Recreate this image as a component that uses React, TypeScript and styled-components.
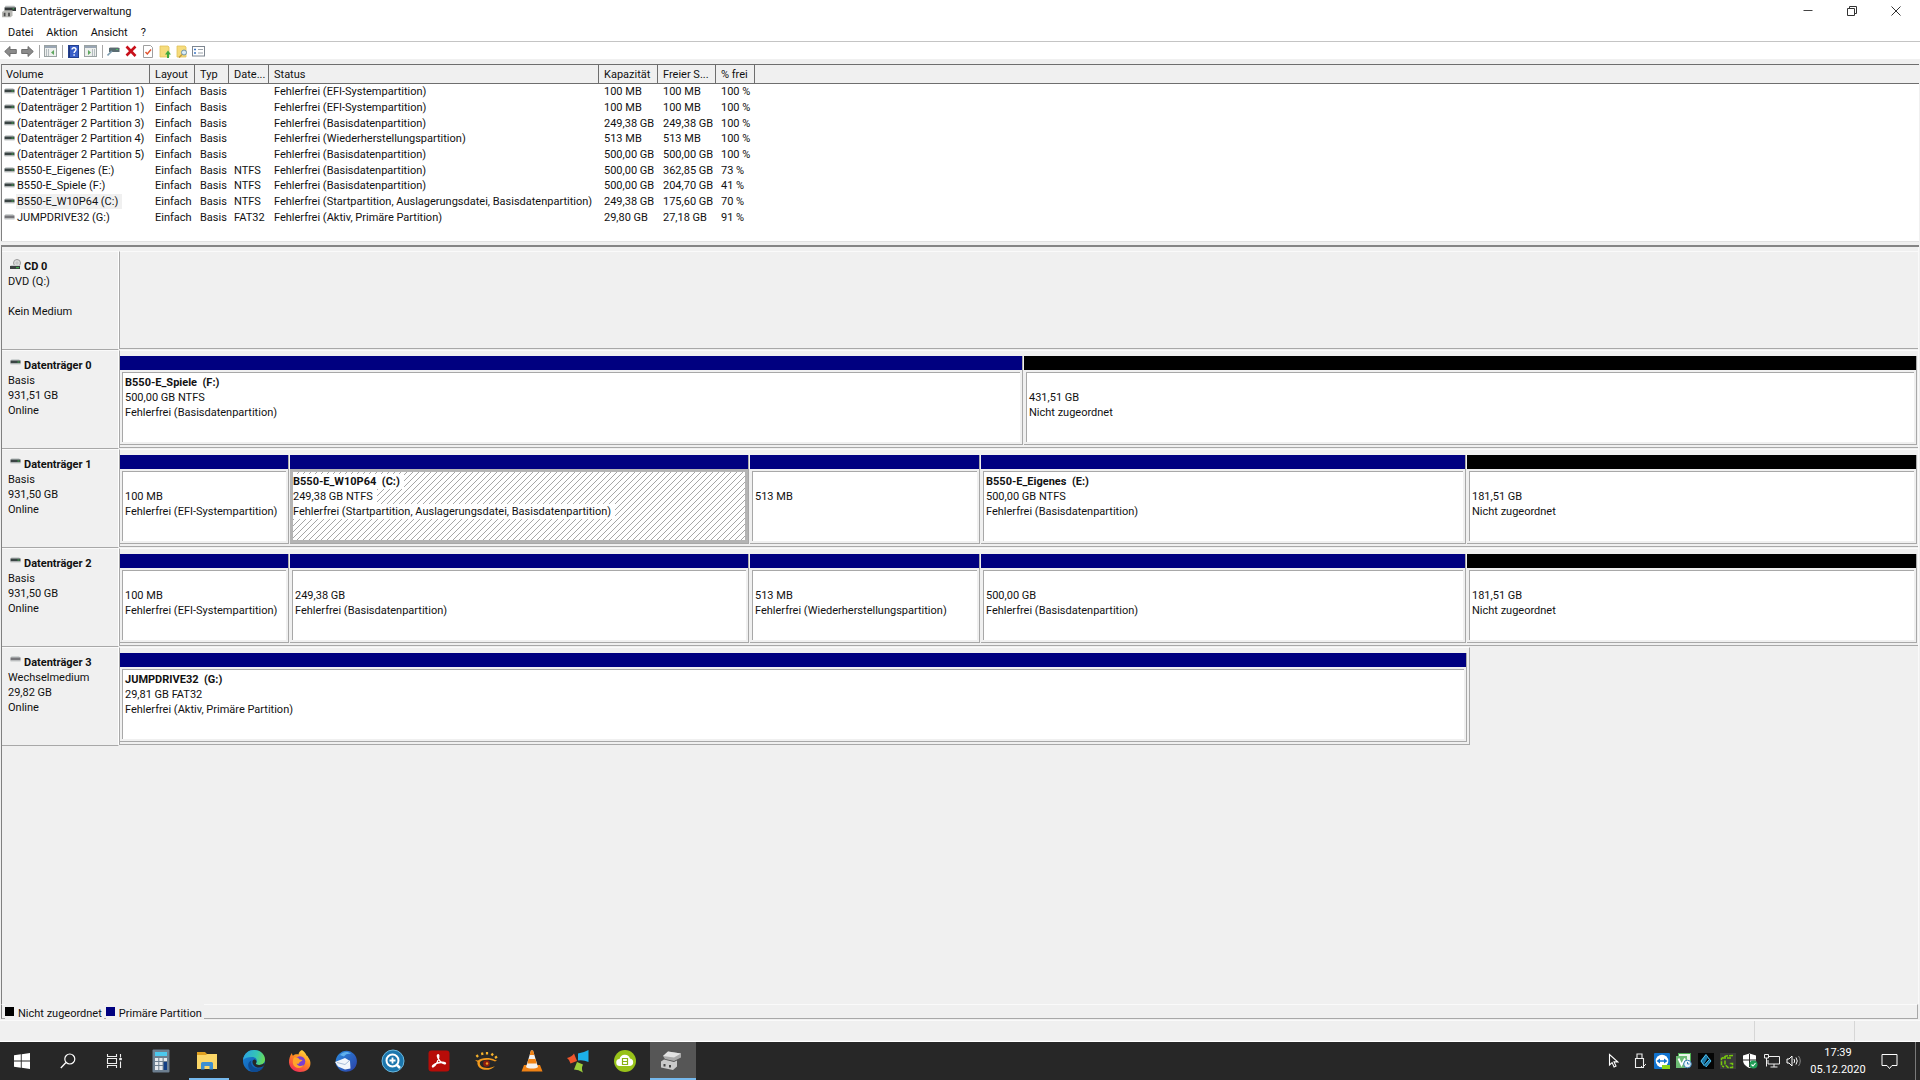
import React from "react";
import styled, { createGlobalStyle, css } from "styled-components";

const GlobalStyle = createGlobalStyle`
  *, *::before, *::after { box-sizing: border-box; }
  html, body { margin: 0; padding: 0; }
  body {
    background: #f0f0f0;
    color: #111;
    font-family: Roboto, "Open Sans", "Liberation Sans", sans-serif;
    font-size: 11px;
    line-height: 15px;
  }
  button { font: inherit; color: inherit; border: 0; background: none; padding: 0; margin: 0; }
  svg { display: block; }
  h1, h2, h3, p { margin: 0; font-size: inherit; font-weight: inherit; }
`;

const Shell = styled.div`
  display: flex;
  flex-direction: column;
  min-height: 100vh;
`;

/* ---------- window chrome ---------- */

const TitleBar = styled.header`
  display: flex;
  align-items: center;
  height: 22px;
  padding: 0 2px;
  background: #fff;
`;

const WindowTitle = styled.h1`
  flex: 1;
  padding-left: 4px;
`;

const WindowButton = styled.button`
  display: grid;
  place-items: center;
  width: 44px;
  height: 22px;
`;

const MenuBar = styled.nav`
  display: flex;
  align-items: center;
  gap: 13px;
  height: 20px;
  padding-left: 8px;
  background: #fff;
  border-bottom: 1px solid #c4c4c4;
`;

const MenuButton = styled.button`
  height: 19px;
  padding-top: 2px;
`;

const Toolbar = styled.div`
  display: flex;
  align-items: center;
  height: 17px;
  padding: 1px 0 0 2px;
  background: #fff;
`;

const ToolButton = styled.button`
  display: grid;
  place-items: center;
  width: 17px;
  height: 16px;
`;

const ToolSeparator = styled.span`
  width: 1px;
  height: 13px;
  margin: 0 2px 0 3px;
  background: #a6a6a6;
`;

/* ---------- volume list ---------- */

const VolumePane = styled.section`
  margin: 5px 1px 0;
  padding-bottom: 16px;
  background: #fff;
  border-top: 1px solid #6e6e6e;
  border-left: 1px solid #808080;
`;

const VolumeTable = styled.table`
  width: 100%;
  height: 160px;
  border-collapse: separate;
  border-spacing: 0;
  table-layout: fixed;
`;

const Column = styled.col<{ $width?: number }>`
  ${(p) => p.$width && css`width: ${p.$width}px;`}
`;

const HeadCell = styled.th`
  height: 19px;
  padding: 1px 0 0 5px;
  overflow: hidden;
  white-space: nowrap;
  font-weight: 400;
  text-align: left;
  line-height: 17px;
  background: #f0f0f0;
  border-right: 1px solid #6e6e6e;
  border-bottom: 1px solid #6e6e6e;
  &:first-child { padding-left: 4px; }
  &:last-child { border-right: 0; }
`;

const Cell = styled.td`
  padding: 0 0 0 5px;
  white-space: nowrap;
`;

const NameCell = styled(Cell)`
  padding-left: 2px;
`;

const VolumeName = styled.span<{ $selected?: boolean }>`
  display: flex;
  align-items: center;
  gap: 1px;
  span {
    padding: 0 4px 0 1px;
    background: ${(p) => (p.$selected ? "#f0f0f0" : "transparent")};
  }
`;

const Splitter = styled.div`
  height: 6px;
  margin: 0 1px;
  border-top: 1px solid #e2e2e2;
  border-bottom: 2px solid #858585;
`;

/* ---------- graphical view ---------- */

const DiskPane = styled.main`
  flex: 1;
  margin: 0 1px;
  padding-top: 4px;
  border-left: 1px solid #808080;
  border-right: 1px solid #fafafa;
`;

const DiskRow = styled.section`
  display: grid;
  grid-template-columns: 117px 1fr;
  height: 99px;
`;

const DiskLabel = styled.div`
  padding: 7px 0 0 6px;
  border-top: 1px solid #fafafa;
  border-right: 1px solid #fff;
  border-bottom: 1px solid #a8a8a8;
`;

const DiskName = styled.h2`
  display: flex;
  gap: 3px;
  height: 15px;
  padding-left: 2px;
  font-weight: 700;
  line-height: 15px;
`;

const DiskLine = styled.p`
  min-height: 15px;
`;

const VolumeArea = styled.div<{ $columns?: string; $partial?: boolean }>`
  display: grid;
  grid-template-columns: ${(p) => p.$columns ?? "1fr"};
  column-gap: 1px;
  width: ${(p) => (p.$partial ? "calc(75% + 2px)" : "100%")};
  height: 98px;
  padding: 5px ${(p) => (p.$partial ? 2 : 1)}px 2px 0;
  border-left: 1px solid #a8a8a8;
  border-bottom: 1px solid #a8a8a8;
  border-top: 1px solid #fafafa;
  border-right: ${(p) => (p.$partial ? "1px solid #a8a8a8" : "0")};
`;

const Partition = styled.article`
  display: flex;
  flex-direction: column;
  min-width: 0;
  border-right: 1px solid #a8a8a8;
  border-bottom: 1px solid #a8a8a8;
`;

const PartitionBar = styled.div<{ $free?: boolean }>`
  height: 14px;
  background: ${(p) => (p.$free ? "#000" : "#000080")};
`;

const PartitionBody = styled.div<{ $active?: boolean }>`
  flex: 1;
  margin: 2px;
  padding: 2px 0 0 2px;
  overflow: hidden;
  background-color: #fff;
  border-top: 1px solid #a8a8a8;
  border-left: 1px solid #a8a8a8;
  ${(p) =>
    p.$active &&
    css`
      margin: 0;
      padding: 2px 0 0;
      border: 3px solid #b4b4b4;
      background-image: linear-gradient(135deg, transparent 44%, #a6a6a6 44%, #a6a6a6 54%, transparent 54%);
      background-size: 6px 6px;
    `}
`;

const PartitionLine = styled.p<{ $strong?: boolean }>`
  width: fit-content;
  min-height: 15px;
  white-space: pre;
  background: #fff;
  padding-right: 4px;
  font-weight: ${(p) => (p.$strong ? 700 : 400)};
`;

const Legend = styled.footer`
  display: flex;
  align-items: center;
  gap: 2px;
  height: 15px;
  margin: 0 2px 0 1px;
  padding-left: 3px;
  border-left: 1px solid #808080;
  border-top: 1px solid #fafafa;
  border-right: 1px solid #a8a8a8;
  border-bottom: 1px solid #a8a8a8;
`;

const LegendItem = styled.span`
  display: flex;
  align-items: center;
  gap: 4px;
  height: 17px;
  padding: 3px 2px 0 0;
  background: #f0f0f0;
`;

const Swatch = styled.i<{ $color: string }>`
  width: 9px;
  height: 9px;
  margin-bottom: 4px;
  background: ${(p) => p.$color};
`;

const StatusBar = styled.div`
  display: grid;
  grid-template-columns: 1fr 100px 65px;
  height: 22px;
  margin-top: 1px;
  border-top: 1px solid #fafafa;
  border-bottom: 1px solid #fff;
`;

const StatusCell = styled.span`
  border-right: 1px solid #d6d6d6;
  &:last-child { border-right: 0; }
`;

/* ---------- taskbar ---------- */

const Taskbar = styled.footer`
  display: flex;
  align-items: stretch;
  justify-content: space-between;
  height: 38px;
  background: #272727;
`;

const Apps = styled.div`
  display: grid;
  grid-template-columns: repeat(15, 1fr);
  flex: 0 1 696px;
`;

const AppButton = styled.button<{ $running?: boolean; $active?: boolean }>`
  display: grid;
  place-items: center;
  padding-right: 3px;
  ${(p) => p.$running && css`
    background: linear-gradient(#76b9ed, #76b9ed) center bottom / 40px 2px no-repeat;
  `}
  ${(p) => p.$active && css`
    background: #565656;
    border-bottom: 2px solid #76b9ed;
    padding-top: 2px;
  `}
`;

const Tray = styled.div`
  display: flex;
  align-items: center;
`;

const TrayButton = styled.button<{ $width?: number }>`
  display: grid;
  place-items: center;
  width: ${(p) => p.$width ?? 22}px;
  height: 38px;
`;

const Clock = styled.time`
  width: 56px;
  margin-left: 5px;
  color: #fff;
  text-align: center;
  line-height: 17px;
`;

const DesktopEdge = styled.button`
  width: 5px;
  height: 38px;
  margin-left: 3px;
  border-left: 1px solid #7a7a7a;
`;

/* ---------- drawings ---------- */

const DriveIcon = ({ removable }: { removable?: boolean }) => (
  <svg width="11" height="9" viewBox="0 0 11 9" aria-hidden="true">
    <path d="M1.500 1h7.500L10.500 3H.5z" fill="#cfd3d3" />
    <rect x=".5" y="2.500" width="10" height="3" fill={removable ? "#77777b" : "#3a4444"} />
    <rect x=".5" y="5.500" width="10" height="1" fill="#c3c7c7" />
    {!removable && <rect x="7.500" y="3.500" width="2" height="1" fill="#3fae4d" />}
  </svg>
);

const CdIcon = () => (
  <svg width="11" height="12" viewBox="0 0 11 12" aria-hidden="true">
    <circle cx="7" cy="4" r="3.500" fill="#dcdcdc" stroke="#9a9a9a" />
    <circle cx="7" cy="4" r="1" fill="#fff" stroke="#999" strokeWidth=".6" />
    <path d="M1 6h8l2 1.500H0z" fill="#c9cccc" />
    <rect y="7" width="10" height="3" fill="#3b4040" />
    <rect x="6" y="8" width="3" height="1.200" fill="#3fae4d" />
  </svg>
);

const AppIcon = () => (
  <svg width="14" height="14" viewBox="0 0 16 16" aria-hidden="true">
    <path d="M4 2h10l2 2v3H3V4z" fill="#b8bcbc" />
    <rect x="3" y="4" width="13" height="4" fill="#33383a" />
    <rect x="12" y="5" width="2" height="1" fill="#41c05a" />
    <path d="M0 9l3-2h9v6l-2 2H0z" fill="#b9b9b5" />
    <rect x="2" y="10" width="2" height="4" fill="#4c4c4c" />
    <rect x="7" y="10" width="2" height="4" fill="#4c4c4c" />
  </svg>
);

const Arrow = ({ flip }: { flip?: boolean }) => (
  <svg width="13" height="13" viewBox="0 0 13 13" aria-hidden="true">
    <path d={flip ? "M12.3 6.5L7 1.5v3H.7v4H7v3z" : "M.7 6.5L6 1.5v3h6.3v4H6v3z"} fill="#8b8b8b" stroke="#666" strokeWidth=".9" />
  </svg>
);

const PaneIcon = ({ right }: { right?: boolean }) => (
  <svg width="13" height="12" viewBox="0 0 13 12" aria-hidden="true">
    <rect x=".5" y=".5" width="12" height="11" fill="#eef0ee" stroke="#9aa2a2" />
    <rect x="1" y="1" width="11" height="2" fill="#9aa6b4" />
    <path d={right ? "M8.5 4v7M10.5 4v7" : "M2.5 4v7M4.5 4v7"} stroke="#b4bcc0" />
    <path d={right ? "M4 5l3 2.5L4 10z" : "M10 5L7 7.5l3 2.5z"} fill="#5fa85f" />
  </svg>
);

const HelpIcon = () => (
  <svg width="11" height="13" viewBox="0 0 11 13" aria-hidden="true">
    <rect x=".5" y=".5" width="10" height="12" fill="#3a5fc8" stroke="#23408f" />
    <path d="M1.5 1v11" stroke="#1f357c" />
    <path d="M4 4.6C4 2 8 2.2 8 4.6 8 6.200 6.100 6.300 6.100 8M6.100 9.300v1.500" stroke="#fff" strokeWidth="1.400" fill="none" />
  </svg>
);

const PlugIcon = () => (
  <svg width="13" height="12" viewBox="0 0 13 12" aria-hidden="true">
    <path d="M3 2h8l2 1.500H2z" fill="#b8bcbc" />
    <rect x="2" y="3" width="10.500" height="4" fill="#5a6c72" />
    <rect x="9" y="4" width="2" height="1" fill="#49c25e" />
    <path d="M.5 10.500L5 6" stroke="#7f9db0" strokeWidth="1.600" />
  </svg>
);

const DeleteIcon = () => (
  <svg width="12" height="12" viewBox="0 0 12 12" aria-hidden="true">
    <path d="M1.500 1.500l9 9.500M10.500 1.500L1.500 10.500" stroke="#c8101a" strokeWidth="2.600" />
  </svg>
);

const CheckDocIcon = () => (
  <svg width="10" height="13" viewBox="0 0 10 13" aria-hidden="true">
    <path d="M.5.5h7l2 2v10h-9z" fill="#fff" stroke="#9f9f9f" />
    <path d="M2.500 7l1.800 2L8 4.500" stroke="#e0512c" strokeWidth="1.400" fill="none" />
  </svg>
);

const FolderUpIcon = () => (
  <svg width="12" height="13" viewBox="0 0 12 13" aria-hidden="true">
    <path d="M1 1h8l1 1v10H1z" fill="#f6dc7c" stroke="#e2c258" strokeWidth=".8" />
    <path d="M8 13V9.500H6l3-4 3 4h-2V13z" fill="#3da83d" />
  </svg>
);

const FolderSearchIcon = () => (
  <svg width="12" height="13" viewBox="0 0 12 13" aria-hidden="true">
    <path d="M1 1h8l1 1v10H1z" fill="#f6dc7c" stroke="#e2c258" strokeWidth=".8" />
    <circle cx="8" cy="7.500" r="2.500" fill="#d9ecf8" stroke="#6f93a8" />
    <path d="M6 9.500L3 12.500" stroke="#c49a3a" strokeWidth="1.500" />
  </svg>
);

const ListIcon = () => (
  <svg width="13" height="11" viewBox="0 0 13 11" aria-hidden="true">
    <rect x=".5" y=".5" width="12" height="9.500" fill="#fff" stroke="#7e8690" />
    <path d="M2 3.500h2M2 7h2" stroke="#3c78c8" strokeWidth="1.400" />
    <path d="M6 3.500h5M6 7h5" stroke="#9ba3ab" />
  </svg>
);

const MinimizeIcon = () => (
  <svg width="10" height="10" viewBox="0 0 10 10" aria-hidden="true"><path d="M.5 4.500h9" stroke="#444" /></svg>
);
const RestoreIcon = () => (
  <svg width="10" height="10" viewBox="0 0 10 10" aria-hidden="true">
    <path d="M.5 2.500h7v7h-7zM2.500 2.500v-2h7v7h-2" fill="none" stroke="#333" />
  </svg>
);
const CloseIcon = () => (
  <svg width="10" height="10" viewBox="0 0 10 10" aria-hidden="true"><path d="M.5.5l9 9M9.500.5l-9 9" stroke="#333" /></svg>
);

const StartIcon = () => (
  <svg width="16" height="16" viewBox="0 0 16 16" aria-hidden="true">
    <path d="M0 2.300L6.800 1.300v6.200H0zM7.700 1.200L16 0v7.500H7.700zM0 8.400h6.800v6.300L0 13.700zM7.700 8.400H16V16l-8.300-1.200z" fill="#fff" />
  </svg>
);
const SearchIcon = () => (
  <svg width="16" height="16" viewBox="0 0 16 16" aria-hidden="true">
    <circle cx="9.800" cy="6" r="5" fill="none" stroke="#fff" strokeWidth="1.200" />
    <path d="M6 9.500L.8 15" stroke="#fff" strokeWidth="1.300" />
  </svg>
);
const TaskViewIcon = () => (
  <svg width="17" height="16" viewBox="0 0 17 16" aria-hidden="true">
    <path d="M1.500 1v2.500h9V1M1.500 15v-2.500h9V15M1.500 5.500h9v5h-9zM14.500 1v3.500M14.500 8.500V15" fill="none" stroke="#eee" strokeWidth="1.100" />
    <rect x="13.200" y="5" width="2.600" height="2.200" fill="#eee" />
  </svg>
);
const CalcIcon = () => (
  <svg width="18" height="24" viewBox="0 0 18 24" aria-hidden="true">
    <rect x=".5" y=".5" width="17" height="23" rx="1" fill="#6d7f90" />
    <rect x="3" y="3" width="12" height="4" fill="#4cc8ee" />
    <g fill="#e6eaee">
      <path d="M3 9h3.300v3H3zM7.300 9h3.300v3H7.300zM11.700 9H15v3h-3.300zM3 13h3.300v3H3zM7.300 13h3.300v3H7.300zM3 17h3.300v4H3zM7.300 17h3.300v4H7.300z" />
    </g>
    <rect x="11.700" y="13" width="3.300" height="8" fill="#123f86" />
  </svg>
);
const ExplorerIcon = () => (
  <svg width="22" height="20" viewBox="0 0 22 20" aria-hidden="true">
    <path d="M1 1h8l2 2h10v5H1z" fill="#e0a020" />
    <path d="M1 4h9l1-1h10v15H1z" fill="#fbd667" />
    <path d="M5 18.500v-6q0-1.500 1.500-1.500h9q1.500 0 1.500 1.500v6h-3.500V15h-5v3.500z" fill="#3d8fd1" />
  </svg>
);
const EdgeIcon = () => (
  <svg width="24" height="24" viewBox="0 0 24 24" aria-hidden="true">
    <defs>
      <linearGradient id="edgeTop" x1="0" x2="1" y1=".3" y2=".5"><stop offset="0" stopColor="#2ba3e4" /><stop offset=".6" stopColor="#35c5b4" /><stop offset="1" stopColor="#6bdc55" /></linearGradient>
      <linearGradient id="edgeLow" x1="0" x2="1" y1="0" y2="1"><stop offset="0" stopColor="#1a87dc" /><stop offset="1" stopColor="#0f4f9f" /></linearGradient>
    </defs>
    <circle cx="12" cy="12" r="11" fill="url(#edgeLow)" />
    <path d="M1 11C2 4 7 1 12 1c7 0 11 5 11 9.500 0 4-3.500 5.500-6 5.500-2.500 0-3.500-1-3-1.800 2-2.500.500-6.200-4-6.200C6 8 2.500 9 1 11z" fill="url(#edgeTop)" />
    <path d="M9.500 11.500C8 16 12 20 17 19.500c2 0 3.500-.700 4.500-1.500-2 3.500-6 5.300-10 5C7 22 5.500 17 6.500 14.500c.500-1.500 1.500-2.500 3-3z" fill="#0e4b93" />
    <path d="M10.500 12.500c.3-1.500 1.500-2.200 2.700-1.800 1.500.8 1.600 2.400.8 3.500-.500.800.500 1.800 3 1.800 2.200 0 4-.700 5.300-2l.5 1.500c-1.500 2-3.500 3-6 3-4 0-6.700-3-6.300-6z" fill="#272727" />
  </svg>
);
const FirefoxIcon = () => (
  <svg width="24" height="24" viewBox="0 0 24 24" aria-hidden="true">
    <defs><linearGradient id="fox" x1=".8" x2=".2" y1="0" y2="1"><stop offset="0" stopColor="#ffe043" /><stop offset=".45" stopColor="#ff8a20" /><stop offset="1" stopColor="#f0245c" /></linearGradient></defs>
    <path d="M14 1c3 2 4 4 4.500 5.500 1 .3 1.300 1 1.500 1.500 2 2.500 2.800 5 2.300 8C21.500 20 18 23 12 23S1.500 19 1 13.500C.8 10 2 6.500 4 4c0 1.200.3 2 1 2.800C6.500 5.300 9 5 10.500 5.500 10.800 3.500 12 1.800 14 1z" fill="url(#fox)" />
    <circle cx="12" cy="12.500" r="5.300" fill="#7b3fd0" />
    <path d="M6 8.500c2.500-.5 4.500.5 5.500 2l3 .5c-.5 1.300-2 1.500-3 2 .3 2-2.500 2-3 1.500 1 2.500 4.500 3.500 7 1.500-1.500 4-9 4-10.500-1-.5-2 0-5 1-6.500z" fill="#ffa52a" />
  </svg>
);
const ThunderbirdIcon = () => (
  <svg width="24" height="24" viewBox="0 0 24 24" aria-hidden="true">
    <defs><linearGradient id="bird" x1="0" x2="1" y1="0" y2="1"><stop offset="0" stopColor="#2b8de0" /><stop offset="1" stopColor="#2b3fa6" /></linearGradient></defs>
    <path d="M5 5C9 .5 16 .5 20 5c4.500 5 3.500 12-1 15.500C14 24 8 23 5 20l-3-4C1 12 2 8 5 5z" fill="url(#bird)" />
    <path d="M1 13l10-4 5 3 .5 7.500-5.500 1-7-3z" fill="#f2f6fb" />
    <path d="M3 13.500l8 2 4.500-4" fill="none" stroke="#a8bdd8" />
    <path d="M6 6c3-3.500 8-4 11-1-3-.5-5 0-7 2.500z" fill="#5fb0ee" />
  </svg>
);
const MagnifierIcon = () => (
  <svg width="24" height="24" viewBox="0 0 24 24" aria-hidden="true">
    <circle cx="12" cy="12" r="11" fill="#1b76ad" stroke="#6bb9df" />
    <circle cx="11.500" cy="11.500" r="6" fill="none" stroke="#fff" strokeWidth="2" />
    <path d="M16 16l3 3" stroke="#fff" strokeWidth="2.500" />
    <path d="M11.500 8.500v6M8.500 11.500h6" stroke="#fff" strokeWidth="1.800" />
  </svg>
);
const AcrobatIcon = () => (
  <svg width="22" height="22" viewBox="0 0 22 22" aria-hidden="true">
    <rect x=".5" y=".5" width="21" height="21" rx="3" fill="#b70c08" />
    <path d="M5 17c3-1.500 6.500-8 5.800-11.500-.3-1.300-1.800-.8-1.400.8C10 9.500 13 13 16.500 13.800c1.500.2 1.300-1.400-.4-1.500-3.600-.2-8.600 1.200-11 3-.9.800-.9 1.700-.1 1.700z" fill="none" stroke="#fff" strokeWidth="1.300" />
  </svg>
);
const EyeIcon = () => (
  <svg width="24" height="22" viewBox="0 0 24 22" aria-hidden="true">
    <path d="M1 10l3 .5C7 7.500 16 7 21 10l2 .5-2 1C17 9 8 9 6 12c-1 3 2 6 7 6 3 0 5-.5 8-2-3 3.500-8 4.500-12 3.500C4 18 3 14 3.500 12z" fill="#f39a1d" />
    <circle cx="12.500" cy="13.500" r="3.300" fill="#8c1d10" />
    <circle cx="13" cy="13.500" r="1.200" fill="#f39a1d" />
    <path d="M4 7L2.500 5M8.500 5L8 2.500M13 4.500V2M17.500 5.500L19 3.500M21 8l2-1.500" stroke="#f6b22c" strokeWidth="2.200" />
  </svg>
);
const ConeIcon = () => (
  <svg width="22" height="24" viewBox="0 0 22 24" aria-hidden="true">
    <path d="M3 16h16l2.500 6.500H.5z" fill="#f08214" />
    <path d="M10 1.500h2L17 18c-2 2-10 2-12 0z" fill="#f5f2ee" />
    <path d="M9.900 1.500h2.200l1.200 4.500H8.700zM7.500 10h7l1.200 4.500H6.300z" fill="#f08214" />
  </svg>
);
const PinwheelIcon = () => (
  <svg width="24" height="24" viewBox="0 0 24 24" aria-hidden="true">
    <path d="M12 4.500q5-.5 10.500-3.500v12Q17 10.500 12 11.500z" fill="#1cb0ea" />
    <path d="M1 9Q6 7.500 8 4.500L11 12 4.500 14.500Q4 11 1 9z" fill="#f0562c" />
    <path d="M11 13l6 2.500q-2 4 0 8-4.500-3-9-3z" fill="#9bcf3a" />
  </svg>
);
const CloudIcon = () => (
  <svg width="24" height="24" viewBox="0 0 24 24" aria-hidden="true">
    <circle cx="12" cy="12" r="11" fill="#98c21a" />
    <path d="M7 17a3.500 3.500 0 01-.5-7A5.500 5.500 0 0117 9.500 3.800 3.800 0 0117 17z" fill="#fff" />
    <path d="M9.500 9.500h5v6h-5zM9.500 12.500h5" fill="none" stroke="#88b114" strokeWidth="1.200" />
  </svg>
);
const DiskAppIcon = () => (
  <svg width="22" height="22" viewBox="0 0 22 22" aria-hidden="true">
    <path d="M3 6L8 1.500l13 2v4L14 11 5 9z" fill="#a9a9a9" />
    <path d="M3 6L8 1.500l13 2L14 7.500z" fill="#e2e2e2" />
    <path d="M1 11.500l3-2 10 2.500 3-1.500v6l-4 3.500-12-2.500z" fill="#c9c9c9" />
    <path d="M4.500 14v2.500M10 15v2.500" stroke="#444" strokeWidth="2" />
  </svg>
);

const PointerIcon = () => (
  <svg width="11" height="16" viewBox="0 0 11 16" aria-hidden="true">
    <path d="M1.500 1.500v10.500l2.600-2.400 2 4.400 1.900-.9-2-4.200h3.700z" fill="#272727" stroke="#fff" strokeWidth="1.100" />
  </svg>
);
const UsbIcon = () => (
  <svg width="12" height="16" viewBox="0 0 12 16" aria-hidden="true">
    <path d="M3 5V1h5v4M1.500 5.500h8v9h-8z" fill="none" stroke="#eee" strokeWidth="1.100" />
    <path d="M7 13l1.500 1.500L12 11" fill="none" stroke="#eee" />
  </svg>
);
const ViewerIcon = () => (
  <svg width="16" height="16" viewBox="0 0 16 16" aria-hidden="true">
    <rect width="16" height="16" rx="1" fill="#1173cf" />
    <circle cx="8" cy="8" r="6.300" fill="#fff" />
    <path d="M2.500 8L6 5.500v1.700h4V5.500L13.500 8 10 10.500V8.800H6v1.700z" fill="#1173cf" />
    <rect x="8" y="12" width="8" height="4" fill="#8bd419" />
  </svg>
);
const SyncIcon = () => (
  <svg width="16" height="16" viewBox="0 0 16 16" aria-hidden="true">
    <rect x="2.500" y=".5" width="12" height="12" fill="#e8f5e8" stroke="#4caf50" />
    <rect x="0" y="3" width="11" height="12" fill="#6dbb74" />
    <path d="M2.500 5.500L5.500 12 9 5.500" stroke="#fff" strokeWidth="1.800" fill="none" />
    <circle cx="11.500" cy="11" r="3.800" fill="#eaf4fb" stroke="#3a7fb5" />
    <path d="M11.500 9v2h2" stroke="#3a7fb5" fill="none" />
  </svg>
);
const LayersIcon = () => (
  <svg width="16" height="16" viewBox="0 0 16 16" aria-hidden="true">
    <rect width="16" height="16" fill="#050505" />
    <path d="M7.500 1.500l-5 6.500 3.500 4.500 5-6zM10 4.500l3 3.500-5.500 6-2-2z" fill="#1b78a8" />
    <path d="M8 1.500L3 8l3 4.500 5.500-6zM11 5.500L13 8l-5 6" stroke="#4fc0ee" fill="none" />
  </svg>
);
const GpuIcon = () => (
  <svg width="16" height="16" viewBox="0 0 16 16" aria-hidden="true">
    <rect width="16" height="16" fill="#3a3a3a" />
    <path d="M13 2.500l-7 .5L1.500 5.500v7L4 14M2 5h9M5 7.500v4l3 3h4.500v-4H9" stroke="#76c80e" strokeWidth="1.500" strokeDasharray="4 1" fill="none" />
  </svg>
);
const ShieldIcon = () => (
  <svg width="16" height="16" viewBox="0 0 16 16" aria-hidden="true">
    <path d="M7.500.5l6.500 2V7c0 4-3 6.500-6.500 8C4 13.500 1 11 1 7V2.500z" fill="#fff" />
    <path d="M7.500 1v13M1 7h13" stroke="#272727" />
    <circle cx="11.500" cy="11.500" r="4" fill="#1f9d55" />
    <path d="M9.500 11.500l1.500 1.500 2.500-3" stroke="#fff" fill="none" strokeWidth="1.100" />
  </svg>
);
const NetworkIcon = () => (
  <svg width="16" height="14" viewBox="0 0 16 14" aria-hidden="true">
    <path d="M5 2.500h10.500v7.500H4V6M10 10v3M6.500 13h7" fill="none" stroke="#eee" />
    <path d="M.5.5h4v3.500h-4zM2.500 4v8.500" fill="none" stroke="#eee" />
  </svg>
);
const SpeakerIcon = () => (
  <svg width="16" height="14" viewBox="0 0 16 14" aria-hidden="true">
    <path d="M1 5h2l3-3v10L3 9H1z" fill="none" stroke="#fff" />
    <path d="M8 5q1.300 2 0 4M10 3.500q2.500 3.500 0 7" fill="none" stroke="#fff" />
    <path d="M12.500 2q3.500 5 0 10" fill="none" stroke="#8a8a8a" />
  </svg>
);
const NoticeIcon = () => (
  <svg width="17" height="17" viewBox="0 0 17 17" aria-hidden="true">
    <path d="M1 1.500h15v11h-5l-2.500 3-2.500-3H1z" fill="none" stroke="#fff" />
  </svg>
);

/* ---------- data ---------- */

const columns: [string, number?][] = [
  ["Volume", 148], ["Layout", 45], ["Typ", 34], ["Date...", 40], ["Status", 330],
  ["Kapazität", 59], ["Freier S...", 58], ["% frei", 39], [""],
];

const volumes = [
  ["(Datenträger 1 Partition 1)", "", "Fehlerfrei (EFI-Systempartition)", "100 MB", "100 MB", "100 %"],
  ["(Datenträger 2 Partition 1)", "", "Fehlerfrei (EFI-Systempartition)", "100 MB", "100 MB", "100 %"],
  ["(Datenträger 2 Partition 3)", "", "Fehlerfrei (Basisdatenpartition)", "249,38 GB", "249,38 GB", "100 %"],
  ["(Datenträger 2 Partition 4)", "", "Fehlerfrei (Wiederherstellungspartition)", "513 MB", "513 MB", "100 %"],
  ["(Datenträger 2 Partition 5)", "", "Fehlerfrei (Basisdatenpartition)", "500,00 GB", "500,00 GB", "100 %"],
  ["B550-E_Eigenes (E:)", "NTFS", "Fehlerfrei (Basisdatenpartition)", "500,00 GB", "362,85 GB", "73 %"],
  ["B550-E_Spiele (F:)", "NTFS", "Fehlerfrei (Basisdatenpartition)", "500,00 GB", "204,70 GB", "41 %"],
  ["B550-E_W10P64 (C:)", "NTFS", "Fehlerfrei (Startpartition, Auslagerungsdatei, Basisdatenpartition)", "249,38 GB", "175,60 GB", "70 %"],
  ["JUMPDRIVE32 (G:)", "FAT32", "Fehlerfrei (Aktiv, Primäre Partition)", "29,80 GB", "27,18 GB", "91 %"],
];

type Part = { name?: string; size: string; state: string; free?: boolean; active?: boolean };
type Disk = { name: string; lines: string[]; kind?: "cd" | "removable"; columns?: string; partial?: boolean; parts: Part[] };

const five = "169fr 459fr 230fr 485fr 450fr";

const disks: Disk[] = [
  { name: "CD 0", kind: "cd", lines: ["DVD (Q:)", "", "Kein Medium"], parts: [] },
  {
    name: "Datenträger 0", lines: ["Basis", "931,51 GB", "Online"], columns: "903fr 893fr",
    parts: [
      { name: "B550-E_Spiele  (F:)", size: "500,00 GB NTFS", state: "Fehlerfrei (Basisdatenpartition)" },
      { size: "431,51 GB", state: "Nicht zugeordnet", free: true },
    ],
  },
  {
    name: "Datenträger 1", lines: ["Basis", "931,50 GB", "Online"], columns: five,
    parts: [
      { size: "100 MB", state: "Fehlerfrei (EFI-Systempartition)" },
      { name: "B550-E_W10P64  (C:)", size: "249,38 GB NTFS", state: "Fehlerfrei (Startpartition, Auslagerungsdatei, Basisdatenpartition)", active: true },
      { size: "513 MB", state: "" },
      { name: "B550-E_Eigenes  (E:)", size: "500,00 GB NTFS", state: "Fehlerfrei (Basisdatenpartition)" },
      { size: "181,51 GB", state: "Nicht zugeordnet", free: true },
    ],
  },
  {
    name: "Datenträger 2", lines: ["Basis", "931,50 GB", "Online"], columns: five,
    parts: [
      { size: "100 MB", state: "Fehlerfrei (EFI-Systempartition)" },
      { size: "249,38 GB", state: "Fehlerfrei (Basisdatenpartition)" },
      { size: "513 MB", state: "Fehlerfrei (Wiederherstellungspartition)" },
      { size: "500,00 GB", state: "Fehlerfrei (Basisdatenpartition)" },
      { size: "181,51 GB", state: "Nicht zugeordnet", free: true },
    ],
  },
  {
    name: "Datenträger 3", kind: "removable", lines: ["Wechselmedium", "29,82 GB", "Online"], partial: true,
    parts: [{ name: "JUMPDRIVE32  (G:)", size: "29,81 GB FAT32", state: "Fehlerfrei (Aktiv, Primäre Partition)" }],
  },
];

const apps: { label: string; icon: React.ReactNode; running?: boolean; active?: boolean }[] = [
  { label: "Start", icon: <StartIcon /> },
  { label: "Suche", icon: <SearchIcon /> },
  { label: "Aktive Anwendungen", icon: <TaskViewIcon /> },
  { label: "Rechner", icon: <CalcIcon /> },
  { label: "Explorer", icon: <ExplorerIcon />, running: true },
  { label: "Edge", icon: <EdgeIcon /> },
  { label: "Firefox", icon: <FirefoxIcon /> },
  { label: "Thunderbird", icon: <ThunderbirdIcon /> },
  { label: "Lupe", icon: <MagnifierIcon /> },
  { label: "Acrobat", icon: <AcrobatIcon /> },
  { label: "Bildbetrachter", icon: <EyeIcon /> },
  { label: "VLC", icon: <ConeIcon /> },
  { label: "Windrad", icon: <PinwheelIcon /> },
  { label: "Mediathek", icon: <CloudIcon /> },
  { label: "Datenträgerverwaltung", icon: <DiskAppIcon />, active: true },
];

const trayItems: [string, React.ReactNode][] = [
  ["USB", <UsbIcon />], ["TeamViewer", <ViewerIcon />], ["Synchronisierung", <SyncIcon />], ["Ebenen", <LayersIcon />],
  ["Grafik", <GpuIcon />], ["Sicherheit", <ShieldIcon />], ["Netzwerk", <NetworkIcon />], ["Lautstärke", <SpeakerIcon />],
];

const toolGroups: [string, React.ReactNode][][] = [
  [["Zurück", <Arrow />], ["Vorwärts", <Arrow flip />]],
  [["Konsolenstruktur", <PaneIcon />]],
  [["Hilfe", <HelpIcon />], ["Aktionsbereich", <PaneIcon right />]],
  [["Verbinden", <PlugIcon />], ["Löschen", <DeleteIcon />], ["Prüfen", <CheckDocIcon />], ["Ordner öffnen", <FolderUpIcon />], ["Suchen", <FolderSearchIcon />], ["Eigenschaften", <ListIcon />]],
];

const DiskEntry = ({ disk }: { disk: Disk }) => (
  <DiskRow>
    <DiskLabel>
      <DiskName>
        {disk.kind === "cd" ? <CdIcon /> : <DriveIcon removable={disk.kind === "removable"} />}
        {disk.name}
      </DiskName>
      {disk.lines.map((line, i) => <DiskLine key={i}>{line}</DiskLine>)}
    </DiskLabel>
    <VolumeArea $columns={disk.columns} $partial={disk.partial}>
      {disk.parts.map((part, i) => (
        <Partition key={i}>
          <PartitionBar $free={part.free} />
          <PartitionBody $active={part.active}>
            <PartitionLine $strong>{part.name}</PartitionLine>
            <PartitionLine>{part.size}</PartitionLine>
            <PartitionLine>{part.state}</PartitionLine>
          </PartitionBody>
        </Partition>
      ))}
    </VolumeArea>
  </DiskRow>
);

export default function App() {
  return (
    <Shell>
      <GlobalStyle />
      <TitleBar>
        <AppIcon />
        <WindowTitle>Datenträgerverwaltung</WindowTitle>
        <WindowButton aria-label="Minimieren"><MinimizeIcon /></WindowButton>
        <WindowButton aria-label="Wiederherstellen"><RestoreIcon /></WindowButton>
        <WindowButton aria-label="Schließen"><CloseIcon /></WindowButton>
      </TitleBar>
      <MenuBar>
        {["Datei", "Aktion", "Ansicht", "?"].map((m) => <MenuButton key={m}>{m}</MenuButton>)}
      </MenuBar>
      <Toolbar>
        {toolGroups.map((group, g) => (
          <React.Fragment key={g}>
            {g > 0 && <ToolSeparator />}
            {group.map(([label, icon]) => <ToolButton key={label} aria-label={label}>{icon}</ToolButton>)}
          </React.Fragment>
        ))}
      </Toolbar>

      <VolumePane>
        <VolumeTable>
          <colgroup>{columns.map(([name, width]) => <Column key={name} $width={width} />)}</colgroup>
          <thead>
            <tr>{columns.map(([name]) => <HeadCell key={name} scope="col">{name}</HeadCell>)}</tr>
          </thead>
          <tbody>
            {volumes.map(([name, fs, state, size, free, percent], i) => (
              <tr key={name}>
                <NameCell>
                  <VolumeName $selected={i === 7}>
                    <DriveIcon removable={i === 8} />
                    <span>{name}</span>
                  </VolumeName>
                </NameCell>
                <Cell>Einfach</Cell>
                <Cell>Basis</Cell>
                <Cell>{fs}</Cell>
                <Cell>{state}</Cell>
                <Cell>{size}</Cell>
                <Cell>{free}</Cell>
                <Cell>{percent}</Cell>
                <Cell />
              </tr>
            ))}
          </tbody>
        </VolumeTable>
      </VolumePane>
      <Splitter />

      <DiskPane>
        {disks.map((disk) => <DiskEntry key={disk.name} disk={disk} />)}
      </DiskPane>
      <Legend>
        <LegendItem><Swatch $color="#000" />Nicht zugeordnet</LegendItem>
        <LegendItem><Swatch $color="#000080" />Primäre Partition</LegendItem>
      </Legend>
      <StatusBar>
        <StatusCell /><StatusCell /><StatusCell />
      </StatusBar>

      <Taskbar>
        <Apps>
          {apps.map((app) => (
            <AppButton key={app.label} aria-label={app.label} $running={app.running} $active={app.active}>{app.icon}</AppButton>
          ))}
        </Apps>
        <Tray>
          <TrayButton $width={32} aria-label="Zeiger"><PointerIcon /></TrayButton>
          {trayItems.map(([label, icon]) => <TrayButton key={label} aria-label={label}>{icon}</TrayButton>)}
          <Clock>17:39<br />05.12.2020</Clock>
          <TrayButton $width={46} aria-label="Benachrichtigungen"><NoticeIcon /></TrayButton>
          <DesktopEdge aria-label="Desktop anzeigen" />
        </Tray>
      </Taskbar>
    </Shell>
  );
}
